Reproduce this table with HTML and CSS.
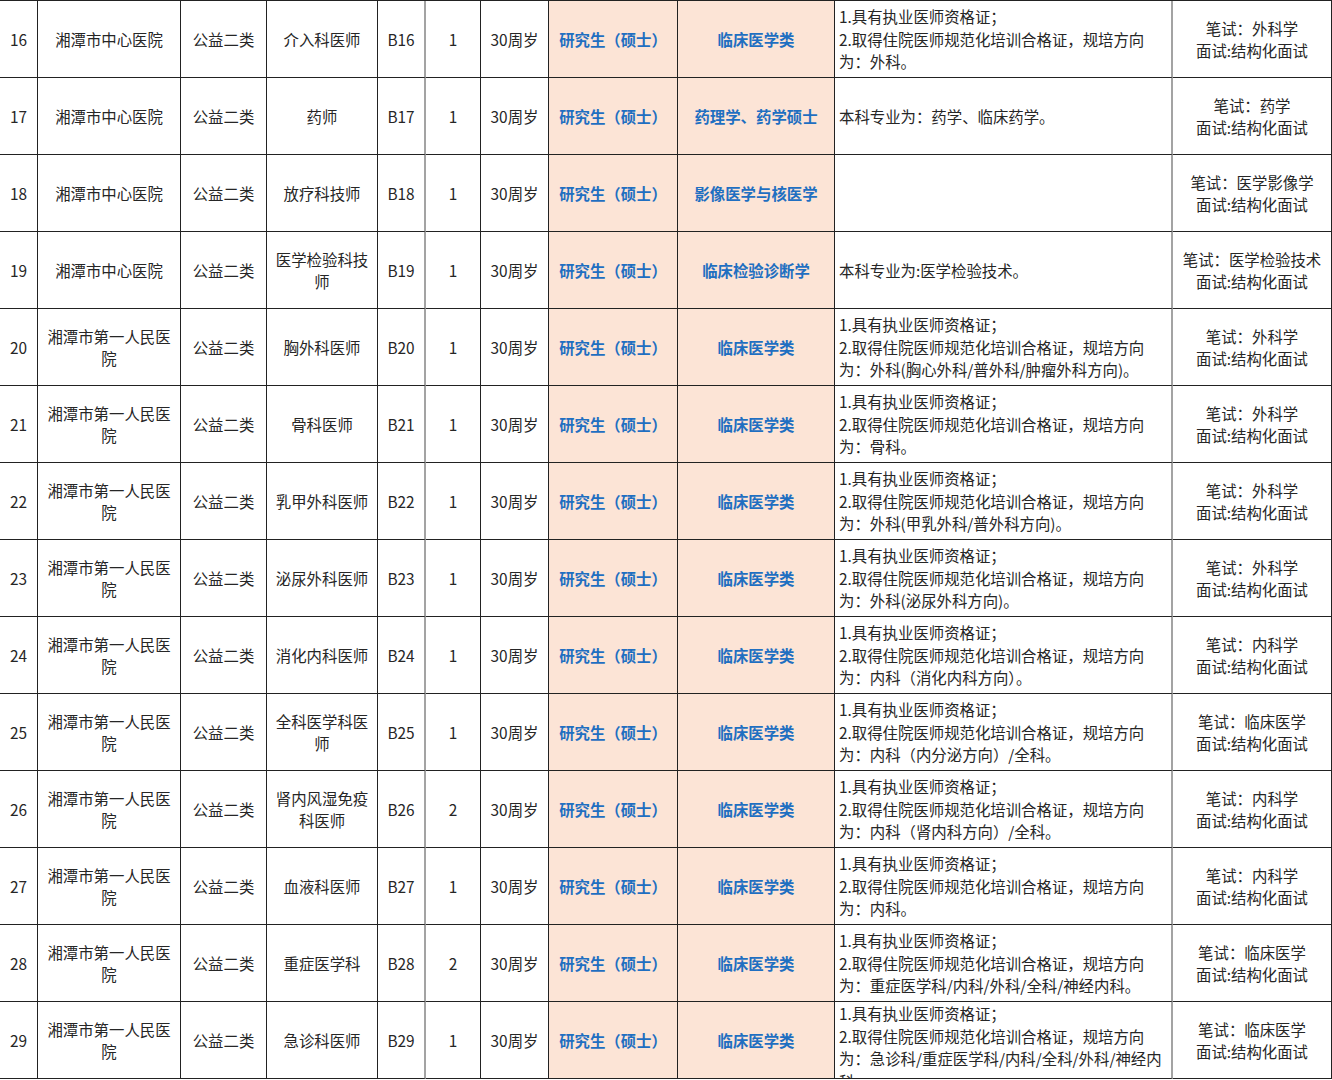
FILE: index.html
```html
<!DOCTYPE html>
<html lang="zh-CN">
<head>
<meta charset="utf-8">
<title>岗位表</title>
<link rel="stylesheet" href="styles.css">
</head>
<body>
<div class="sheet">
  <div class="c">16</div><div class="c">湘潭市中心医院</div><div class="c">公益二类</div><div class="c">介入科医师</div><div class="c code">B16</div><div class="c">1</div><div class="c">30周岁</div><div class="c hl">研究生（硕士）</div><div class="c hl">临床医学类</div><div class="c req"><span>1.具有执业医师资格证；<br>2.取得住院医师规范化培训合格证，规培方向<br>为：外科。</span></div><div class="c exam"><span>笔试：外科学<br>面试:结构化面试</span></div>

  <div class="c">17</div><div class="c">湘潭市中心医院</div><div class="c">公益二类</div><div class="c">药师</div><div class="c code">B17</div><div class="c">1</div><div class="c">30周岁</div><div class="c hl">研究生（硕士）</div><div class="c hl">药理学、药学硕士</div><div class="c req"><span>本科专业为：药学、临床药学。</span></div><div class="c exam"><span>笔试：药学<br>面试:结构化面试</span></div>

  <div class="c">18</div><div class="c">湘潭市中心医院</div><div class="c">公益二类</div><div class="c">放疗科技师</div><div class="c code">B18</div><div class="c">1</div><div class="c">30周岁</div><div class="c hl">研究生（硕士）</div><div class="c hl">影像医学与核医学</div><div class="c req"></div><div class="c exam"><span>笔试：医学影像学<br>面试:结构化面试</span></div>

  <div class="c">19</div><div class="c">湘潭市中心医院</div><div class="c">公益二类</div><div class="c"><span>医学检验科技<br>师</span></div><div class="c code">B19</div><div class="c">1</div><div class="c">30周岁</div><div class="c hl">研究生（硕士）</div><div class="c hl">临床检验诊断学</div><div class="c req"><span>本科专业为:医学检验技术。</span></div><div class="c exam"><span>笔试：医学检验技术<br>面试:结构化面试</span></div>

  <div class="c">20</div><div class="c"><span>湘潭市第一人民医<br>院</span></div><div class="c">公益二类</div><div class="c">胸外科医师</div><div class="c code">B20</div><div class="c">1</div><div class="c">30周岁</div><div class="c hl">研究生（硕士）</div><div class="c hl">临床医学类</div><div class="c req"><span>1.具有执业医师资格证；<br>2.取得住院医师规范化培训合格证，规培方向<br>为：外科(胸心外科/普外科/肿瘤外科方向)。</span></div><div class="c exam"><span>笔试：外科学<br>面试:结构化面试</span></div>

  <div class="c">21</div><div class="c"><span>湘潭市第一人民医<br>院</span></div><div class="c">公益二类</div><div class="c">骨科医师</div><div class="c code">B21</div><div class="c">1</div><div class="c">30周岁</div><div class="c hl">研究生（硕士）</div><div class="c hl">临床医学类</div><div class="c req"><span>1.具有执业医师资格证；<br>2.取得住院医师规范化培训合格证，规培方向<br>为：骨科。</span></div><div class="c exam"><span>笔试：外科学<br>面试:结构化面试</span></div>

  <div class="c">22</div><div class="c"><span>湘潭市第一人民医<br>院</span></div><div class="c">公益二类</div><div class="c">乳甲外科医师</div><div class="c code">B22</div><div class="c">1</div><div class="c">30周岁</div><div class="c hl">研究生（硕士）</div><div class="c hl">临床医学类</div><div class="c req"><span>1.具有执业医师资格证；<br>2.取得住院医师规范化培训合格证，规培方向<br>为：外科(甲乳外科/普外科方向)。</span></div><div class="c exam"><span>笔试：外科学<br>面试:结构化面试</span></div>

  <div class="c">23</div><div class="c"><span>湘潭市第一人民医<br>院</span></div><div class="c">公益二类</div><div class="c">泌尿外科医师</div><div class="c code">B23</div><div class="c">1</div><div class="c">30周岁</div><div class="c hl">研究生（硕士）</div><div class="c hl">临床医学类</div><div class="c req"><span>1.具有执业医师资格证；<br>2.取得住院医师规范化培训合格证，规培方向<br>为：外科(泌尿外科方向)。</span></div><div class="c exam"><span>笔试：外科学<br>面试:结构化面试</span></div>

  <div class="c">24</div><div class="c"><span>湘潭市第一人民医<br>院</span></div><div class="c">公益二类</div><div class="c">消化内科医师</div><div class="c code">B24</div><div class="c">1</div><div class="c">30周岁</div><div class="c hl">研究生（硕士）</div><div class="c hl">临床医学类</div><div class="c req"><span>1.具有执业医师资格证；<br>2.取得住院医师规范化培训合格证，规培方向<br>为：内科（消化内科方向）。</span></div><div class="c exam"><span>笔试：内科学<br>面试:结构化面试</span></div>

  <div class="c">25</div><div class="c"><span>湘潭市第一人民医<br>院</span></div><div class="c">公益二类</div><div class="c"><span>全科医学科医<br>师</span></div><div class="c code">B25</div><div class="c">1</div><div class="c">30周岁</div><div class="c hl">研究生（硕士）</div><div class="c hl">临床医学类</div><div class="c req"><span>1.具有执业医师资格证；<br>2.取得住院医师规范化培训合格证，规培方向<br>为：内科（内分泌方向）/全科。</span></div><div class="c exam"><span>笔试：临床医学<br>面试:结构化面试</span></div>

  <div class="c">26</div><div class="c"><span>湘潭市第一人民医<br>院</span></div><div class="c">公益二类</div><div class="c"><span>肾内风湿免疫<br>科医师</span></div><div class="c code">B26</div><div class="c">2</div><div class="c">30周岁</div><div class="c hl">研究生（硕士）</div><div class="c hl">临床医学类</div><div class="c req"><span>1.具有执业医师资格证；<br>2.取得住院医师规范化培训合格证，规培方向<br>为：内科（肾内科方向）/全科。</span></div><div class="c exam"><span>笔试：内科学<br>面试:结构化面试</span></div>

  <div class="c">27</div><div class="c"><span>湘潭市第一人民医<br>院</span></div><div class="c">公益二类</div><div class="c">血液科医师</div><div class="c code">B27</div><div class="c">1</div><div class="c">30周岁</div><div class="c hl">研究生（硕士）</div><div class="c hl">临床医学类</div><div class="c req"><span>1.具有执业医师资格证；<br>2.取得住院医师规范化培训合格证，规培方向<br>为：内科。</span></div><div class="c exam"><span>笔试：内科学<br>面试:结构化面试</span></div>

  <div class="c">28</div><div class="c"><span>湘潭市第一人民医<br>院</span></div><div class="c">公益二类</div><div class="c">重症医学科</div><div class="c code">B28</div><div class="c">2</div><div class="c">30周岁</div><div class="c hl">研究生（硕士）</div><div class="c hl">临床医学类</div><div class="c req"><span>1.具有执业医师资格证；<br>2.取得住院医师规范化培训合格证，规培方向<br>为：重症医学科/内科/外科/全科/神经内科。</span></div><div class="c exam"><span>笔试：临床医学<br>面试:结构化面试</span></div>

  <div class="c">29</div><div class="c"><span>湘潭市第一人民医<br>院</span></div><div class="c">公益二类</div><div class="c">急诊科医师</div><div class="c code">B29</div><div class="c">1</div><div class="c">30周岁</div><div class="c hl">研究生（硕士）</div><div class="c hl">临床医学类</div><div class="c req top"><span>1.具有执业医师资格证；<br>2.取得住院医师规范化培训合格证，规培方向<br>为：急诊科/重症医学科/内科/全科/外科/神经内<br>科。</span></div><div class="c exam"><span>笔试：临床医学<br>面试:结构化面试</span></div>
</div>
</body>
</html>
```

FILE: styles.css
```css
html, body {
  margin: 0;
  padding: 0;
  background: #ffffff;
}

body {
  font-family: "Noto Sans CJK SC", "Microsoft YaHei", sans-serif;
  font-size: 15.4px;
  color: #262626;
  overflow: hidden;
}

.sheet {
  display: grid;
  grid-template-columns: 38px 143px 86px 111px 48px 55px 68px 129px 157px 338px 159px;
  grid-auto-rows: 77px;
  width: 1332px;
  border-top: 1px solid #222222;
}

.c {
  box-sizing: border-box;
  border-right: 1px solid #222222;
  border-bottom: 1px solid #222222;
  display: flex;
  align-items: center;
  justify-content: center;
  text-align: center;
  line-height: 22.5px;
  white-space: nowrap;
  min-width: 0;
}

.c.code {
  border-right: 2px solid #a3a3a3;
}

.c.hl {
  background: #fce4d6;
  color: #1f6fc1;
  font-weight: 700;
}

.c.req {
  justify-content: flex-start;
  text-align: left;
  padding-left: 4px;
  border-right: 2px solid #a3a3a3;
}

.c.req.top {
  align-items: flex-start;
}

.c.exam {
  padding: 0 2px;
}
```
